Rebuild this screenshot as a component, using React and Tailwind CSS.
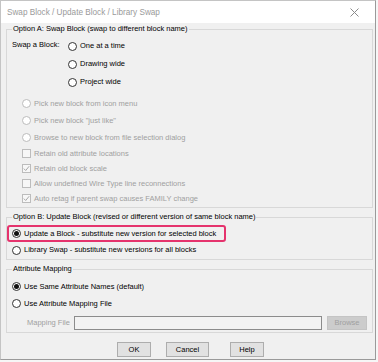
import React from "react";

const F = { fontFamily: '"Liberation Sans", Arial, sans-serif' };

function Radio({ checked, disabled }) {
  return (
    <span
      className={`flex w-[9px] h-[9px] shrink-0 items-center justify-center rounded-full border bg-white ${
        disabled ? "border-[#bcbcbc]" : "border-[#333333]"
      }`}
    >
      {checked && <span className="block w-[5px] h-[5px] rounded-full bg-[#111111]" />}
    </span>
  );
}

function Check({ checked }) {
  return (
    <span className="flex w-[9px] h-[9px] shrink-0 items-center justify-center border border-[#bcbcbc] bg-[#f7f7f7]">
      {checked && (
        <svg width="7" height="7" viewBox="0 0 7 7">
          <path d="M0.8 3.6 L2.7 5.5 L6.2 1.2" fill="none" stroke="#a8a8a8" strokeWidth="1" />
        </svg>
      )}
    </span>
  );
}

function Row({ h, className = "", children }) {
  return <div className={`flex items-center gap-[3px] whitespace-nowrap ${h} ${className}`}>{children}</div>;
}

export default function App() {
  return (
    <div className="w-[378px] h-[362px] bg-[#f6f6f6]" style={F}>
      <div className="w-[376px] h-[360px] flex flex-col border border-[#c4c4c4] border-r-[#9a9a9a] border-b-[#9a9a9a] bg-[#f0f0f0] text-[7.5px] leading-[10px] text-[#000000] whitespace-nowrap">
        {/* title bar */}
        <div className="h-[22px] shrink-0 bg-white flex items-center justify-between pl-[6px] pr-[16px] pt-[1px]">
          <span className="text-[8.2px] text-[#9a9a9a]">Swap Block / Update Block / Library Swap</span>
          <svg width="9" height="9" viewBox="0 0 9 9">
            <path d="M0.5 0.5 L8.5 8.5 M8.5 0.5 L0.5 8.5" stroke="#8a8a8a" strokeWidth="1" />
          </svg>
        </div>

        {/* Group A */}
        <fieldset className="ml-[5px] mt-[1px] w-[367px] border border-[#d8d8d8] px-[5px] pb-[1px]">
          <legend className="px-[1px] leading-[10px]">Option A: Swap Block (swap to different block name)</legend>
          <div className="flex mt-[3px]">
            <div className="w-[56px] pt-[3px] leading-[10px]">Swap a Block:</div>
            <div className="flex flex-col">
              <Row h="h-[18px]"><Radio /><span>One at a time</span></Row>
              <Row h="h-[18px]"><Radio /><span>Drawing wide</span></Row>
              <Row h="h-[18px]"><Radio /><span>Project wide</span></Row>
            </div>
          </div>
          <div className="flex flex-col mt-[4px] pl-[10px] text-[#a0a0a0]">
            <Row h="h-[17px]"><Radio disabled /><span>Pick new block from icon menu</span></Row>
            <Row h="h-[17px]"><Radio disabled /><span>Pick new block "just like"</span></Row>
            <Row h="h-[17px]"><Radio disabled /><span>Browse to new block from file selection dialog</span></Row>
            <Row h="h-[15px]"><Check /><span>Retain old attribute locations</span></Row>
            <Row h="h-[15px]"><Check checked /><span>Retain old block scale</span></Row>
            <Row h="h-[15px]"><Check /><span>Allow undefined Wire Type line reconnections</span></Row>
            <Row h="h-[15px]"><Check checked /><span>Auto retag if parent swap causes FAMILY change</span></Row>
          </div>
        </fieldset>

        {/* Group B */}
        <fieldset className="ml-[5px] mt-[4px] w-[367px] border border-[#d8d8d8] pb-[1px]">
          <legend className="ml-[5px] px-[1px] leading-[10px]">Option B: Update Block (revised or different version of same block name)</legend>
          <div className="mt-[3px] w-[219px] h-[17px] flex items-center gap-[3px] rounded-[3px] border-2 border-[#e5336d] pl-[3px]">
            <Radio checked /><span>Update a Block - substitute new version for selected block</span>
          </div>
          <Row h="h-[16px]" className="pl-[5px]"><Radio /><span>Library Swap - substitute new versions for all blocks</span></Row>
        </fieldset>

        {/* Group C */}
        <fieldset className="ml-[5px] mt-[4px] w-[367px] border border-[#d8d8d8] px-[5px] pb-[2px]">
          <legend className="px-[1px] leading-[10px]">Attribute Mapping</legend>
          <div className="flex flex-col mt-[4px]">
            <Row h="h-[17px]"><Radio checked /><span>Use Same Attribute Names (default)</span></Row>
            <Row h="h-[17px]"><Radio /><span>Use Attribute Mapping File</span></Row>
          </div>
          <div className="flex items-center mt-[4px] h-[14px]">
            <span className="w-[62px] pl-[15px] text-[#a0a0a0]">Mapping File</span>
            <div className="w-[248px] h-[14px] border border-[#8c8c8c] bg-[#f3f3f3]" />
            <div className="ml-[5px] w-[40px] h-[14px] flex items-center justify-center border border-[#c4c4c4] bg-[#cccccc] text-[#a0a0a0]">Browse</div>
          </div>
        </fieldset>

        {/* Buttons */}
        <div className="flex mt-[9px] pl-[116px]">
          <div className="w-[34px] h-[15px] flex items-center justify-center border border-[#adadad] bg-[#e1e1e1]">OK</div>
          <div className="ml-[15px] w-[43px] h-[15px] flex items-center justify-center border border-[#adadad] bg-[#e1e1e1]">Cancel</div>
          <div className="ml-[21px] w-[34px] h-[15px] flex items-center justify-center border border-[#adadad] bg-[#e1e1e1]">Help</div>
        </div>
      </div>
    </div>
  );
}
